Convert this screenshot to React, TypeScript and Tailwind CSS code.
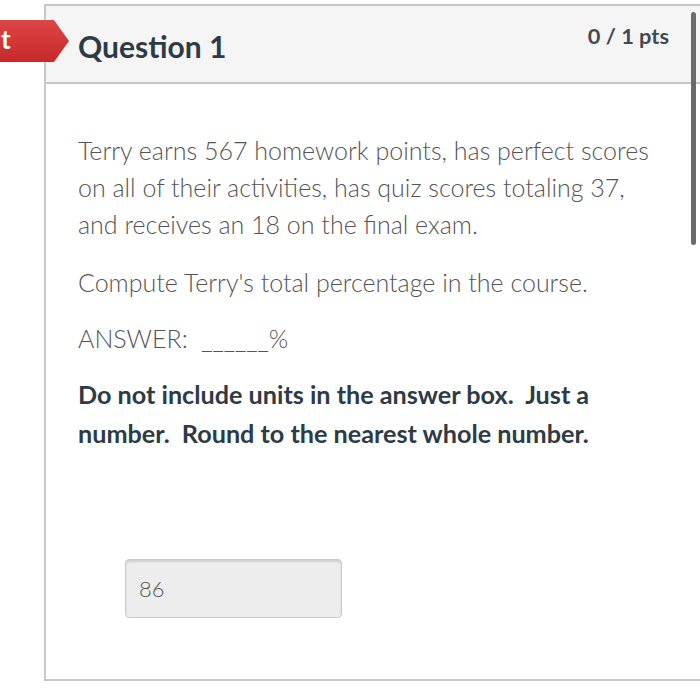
export default function App() {
  return (
    <div className="relative w-[700px] h-[695px] bg-white overflow-hidden font-['Lato','Liberation_Sans',sans-serif]">
      <div className="ml-[44px] mt-[4px] w-[656px] h-[677px] border-2 border-r-0 border-[#c7c7c7] flex flex-col">
        <div className="h-[78px] shrink-0 bg-[#f5f5f5] border-b-2 border-[#c7c7c7] flex items-start justify-between pl-[32px] pr-[31px]">
          <h2 className="mt-[20px] text-[30px] leading-[40px] font-bold text-[#2d3b45]">Question 1</h2>
          <div className="mt-[14px] text-[21.8px] leading-[32px] font-bold text-[#3f4a52]">0 / 1 pts</div>
        </div>
        <div className="pl-[32px] pr-[20px] pt-[48px] text-[#555555] text-[25px] leading-[37px] font-light">
          <p className="w-[585px]">
            Terry earns 567 homework points, has perfect scores on all of their activities, has quiz scores totaling 37, and receives an 18 on the final exam.
          </p>
          <p className="mt-[21px]">Compute Terry's total percentage in the course.</p>
          <p className="mt-[19px]">ANSWER:&nbsp; ______%</p>
          <p className="mt-[18px] w-[530px] font-bold text-[#2d3b45] text-[25.2px] leading-[39px]">
            Do not include units in the answer box.&nbsp; Just a number.&nbsp; Round to the nearest whole number.
          </p>
          <div className="mt-[106px] ml-[47px] w-[217px] h-[59px] bg-[#ededed] border border-[#c9c9c9] rounded-[4px] shadow-[inset_0_2px_2px_rgba(0,0,0,0.12)] flex items-center pl-[13px] text-[22px] text-[#555555]">
            86
          </div>
        </div>
      </div>

      {/* red flag */}
      <div className="absolute left-0 top-[20px] h-[42px] flex">
        <div className="w-[54px] bg-gradient-to-b from-[#e04545] to-[#c42a2a] text-white font-bold text-[26px] leading-[38px] pl-[1px]">t</div>
        <svg width="15" height="42" viewBox="0 0 15 42" className="block">
          <defs>
            <linearGradient id="fg" x1="0" y1="0" x2="0" y2="1">
              <stop offset="0" stopColor="#e04545" />
              <stop offset="1" stopColor="#c42a2a" />
            </linearGradient>
          </defs>
          <path d="M0 0 L15 21 L0 42 Z" fill="url(#fg)" />
        </svg>
      </div>

      {/* scrollbar */}
      <div className="absolute left-[691px] top-[12px] w-[5px] h-[233px] rounded-full bg-[#6b6b6b]" />
    </div>
  )
}
